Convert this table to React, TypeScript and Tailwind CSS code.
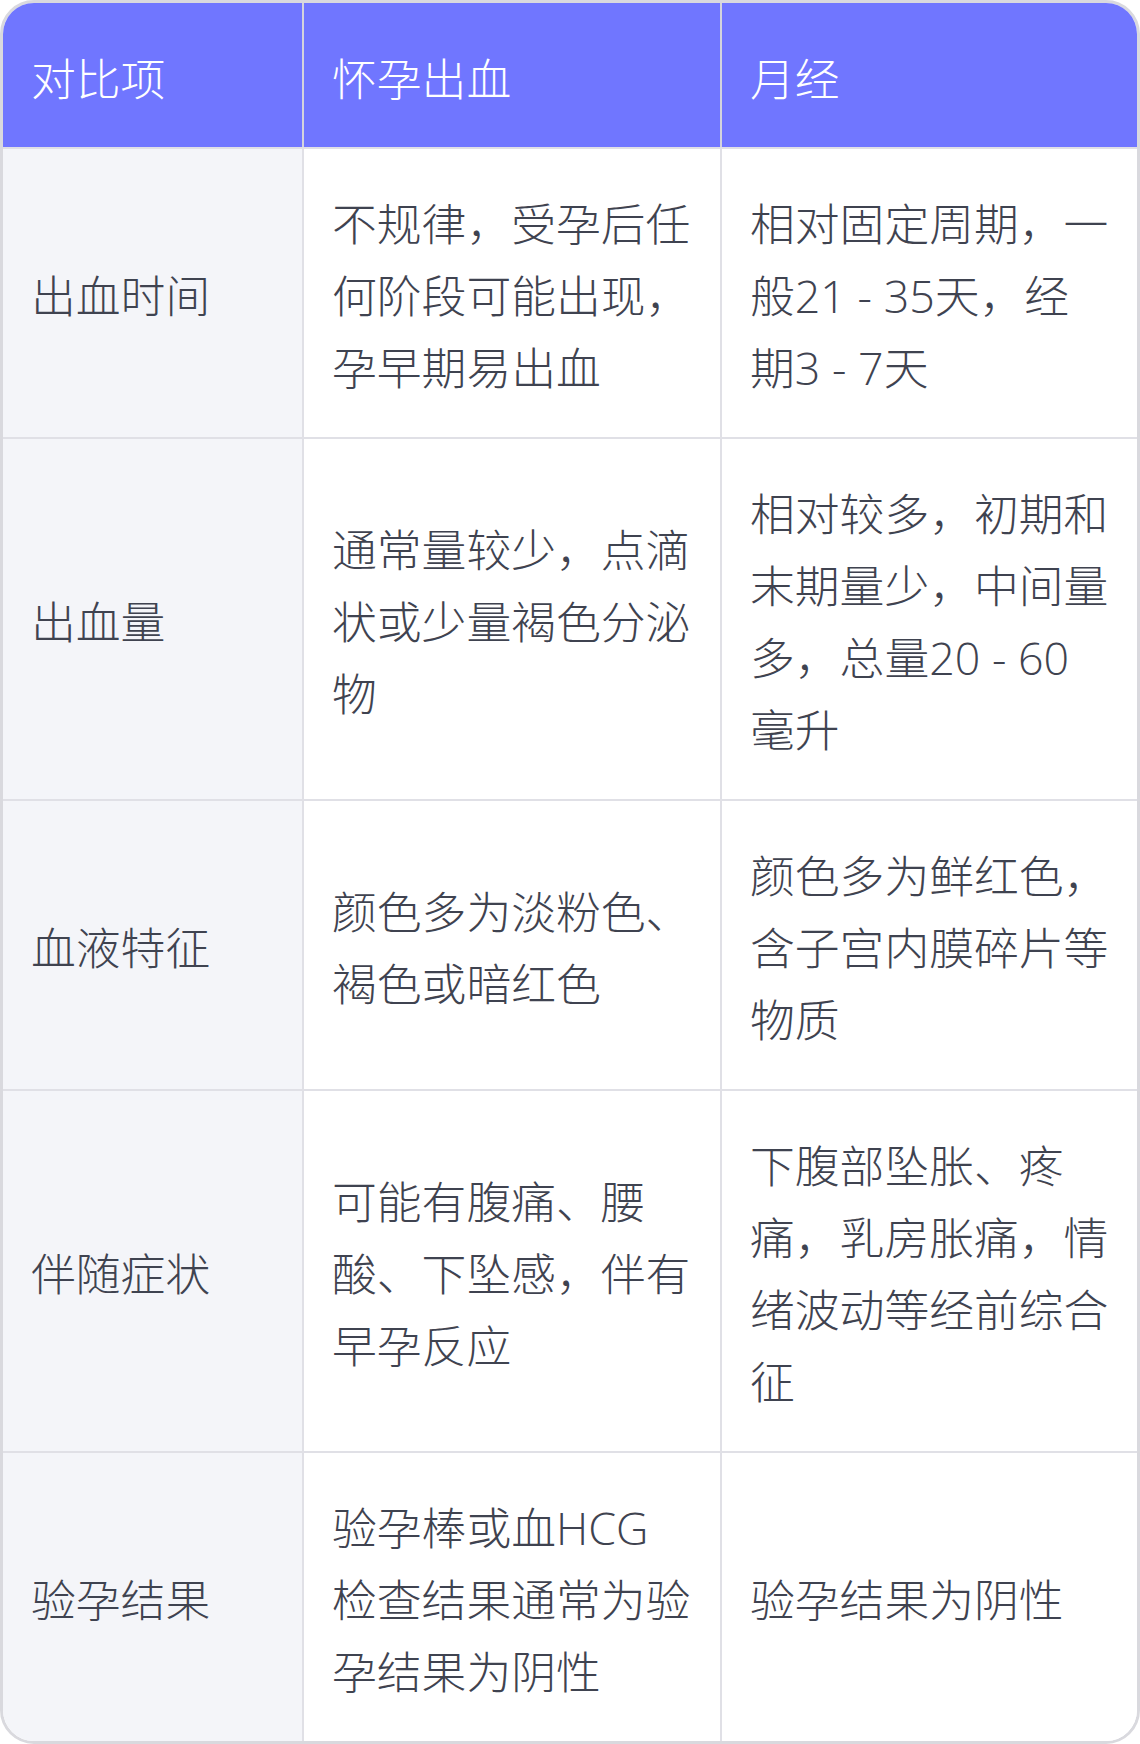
import React from 'react';

const rows: [string, string, string][] = [
  ['出血时间', '不规律，受孕后任何阶段可能出现，孕早期易出血', '相对固定周期，一般21 - 35天，经期3 - 7天'],
  ['出血量', '通常量较少，点滴状或少量褐色分泌物', '相对较多，初期和末期量少，中间量多，总量20 - 60毫升'],
  ['血液特征', '颜色多为淡粉色、褐色或暗红色', '颜色多为鲜红色，含子宫内膜碎片等物质'],
  ['伴随症状', '可能有腹痛、腰酸、下坠感，伴有早孕反应', '下腹部坠胀、疼痛，乳房胀痛，情绪波动等经前综合征'],
  ['验孕结果', '验孕棒或血HCG检查结果通常为验孕结果为阴性', '验孕结果为阴性'],
];

const cell = 'flex items-center px-[28px]';

const App: React.FC = () => {
  return (
    <div className="w-[1140px] bg-white font-['Open_Sans','Noto_Sans_CJK_SC',sans-serif] font-light text-[44.8px] leading-[72px]">
      <div className="rounded-[34px] border-[3px] border-[#d9d9de] overflow-hidden">
        {/* Header */}
        <div className="grid grid-cols-[299px_418px_417px] bg-[#7076ff] text-white">
          <div className={`${cell} pt-[40px] pb-[32px]`}>对比项</div>
          <div className={`${cell} pt-[40px] pb-[32px] border-l-2 border-[#d4d4dc]`}>怀孕出血</div>
          <div className={`${cell} pt-[40px] pb-[32px] border-l-2 border-[#d4d4dc]`}>月经</div>
        </div>

        {rows.map(([item, preg, period]) => (
          <div
            key={item}
            className="grid grid-cols-[299px_418px_417px] border-t-2 border-[#e0e0e6] text-[#3f4350]"
          >
            <div className={`${cell} pt-[39px] pb-[33px] bg-[#f4f5f9]`}>{item}</div>
            <div className={`${cell} pt-[39px] pb-[33px] border-l-2 border-[#e0e0e6] bg-white`}>{preg}</div>
            <div className={`${cell} pt-[39px] pb-[33px] border-l-2 border-[#e0e0e6] bg-white`}>{period}</div>
          </div>
        ))}
      </div>
    </div>
  );
};

export default App;
